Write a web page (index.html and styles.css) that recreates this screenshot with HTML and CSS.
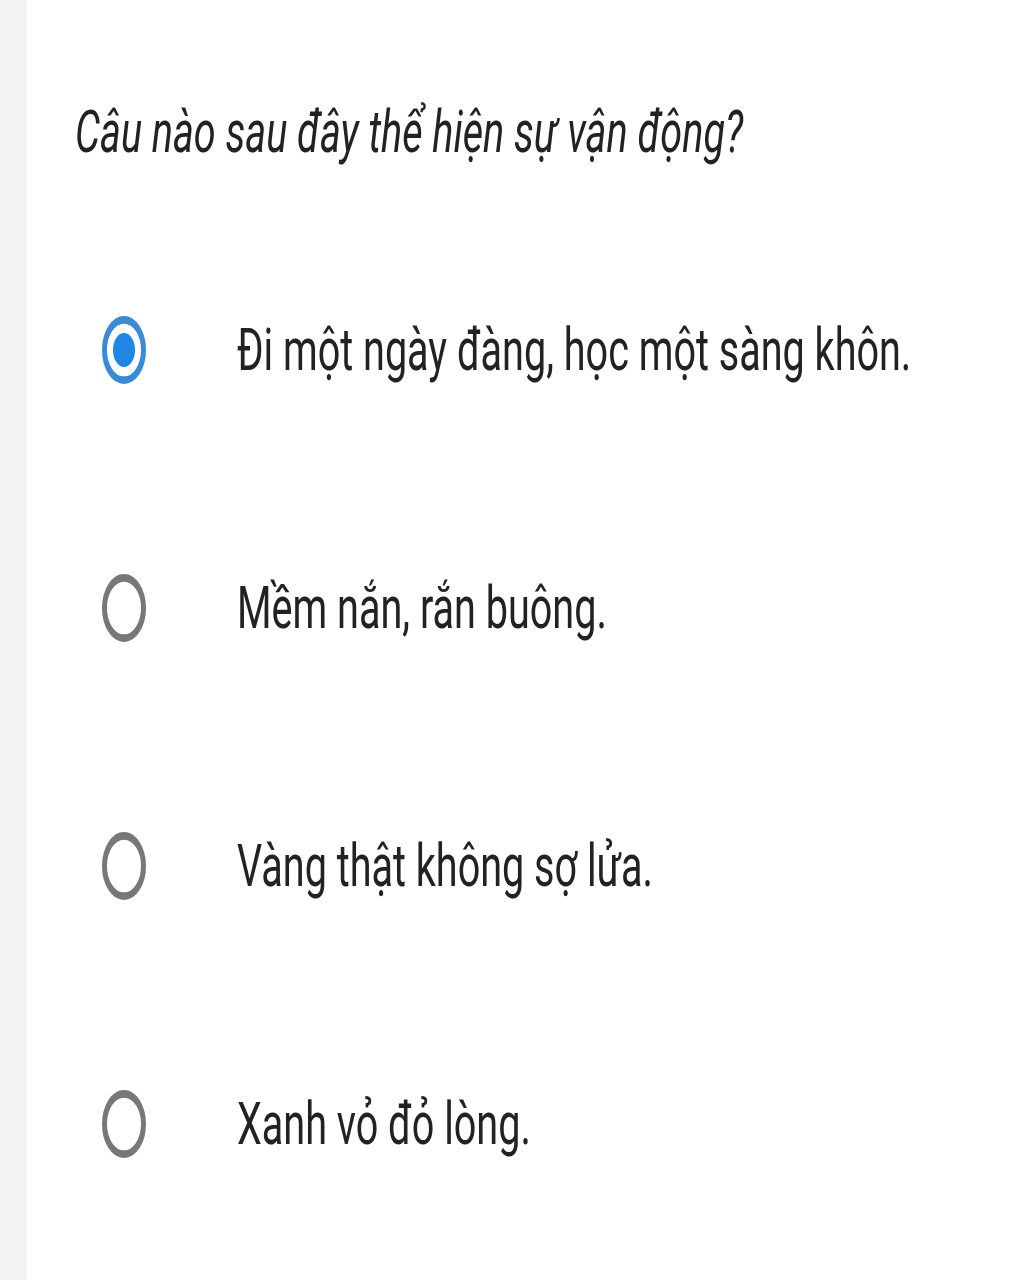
FILE: index.html
```html
<!DOCTYPE html>
<html lang="vi">
<head>
  <meta charset="UTF-8" />
  <title>Câu hỏi</title>
  <link rel="stylesheet" href="styles.css">
</head>
<body>
  <div class="sheet">
    <div class="gutter"></div>
    <main class="card">
      <div class="question"><span class="tall">Câu nào sau đây thể hiện sự vận động?</span></div>
      <div class="options">
        <label class="option">
          <span class="radio checked"></span>
          <span class="text tall">Đi một ngày đàng, học một sàng khôn.</span>
        </label>
        <label class="option">
          <span class="radio"></span>
          <span class="text tall">Mềm nắn, rắn buông.</span>
        </label>
        <label class="option">
          <span class="radio"></span>
          <span class="text tall">Vàng thật không sợ lửa.</span>
        </label>
        <label class="option">
          <span class="radio"></span>
          <span class="text tall">Xanh vỏ đỏ lòng.</span>
        </label>
      </div>
    </main>
  </div>
</body>
</html>
```

FILE: styles.css
```css
html, body {
  margin: 0;
  background: #fff;
  color: #222;
  font-family: Roboto, "Noto Sans", sans-serif;
  overflow: hidden;
}

.sheet {
  display: flex;
  min-height: 100vh;
}

.gutter {
  width: 25px;
  flex: none;
  background: #f1f3f4;
  border-right: 1px solid #e8eaed;
}

.card {
  flex: 1;
  padding: 108px 0 0 49px;
}

/* the screenshot is stretched tall */
.tall {
  display: inline-block;
  transform: scaleY(1.5);
}

.question {
  font-size: 39.6px;
  font-style: italic;
  line-height: 48px;
}

.options {
  margin-top: 65px;
  display: flex;
  flex-direction: column;
}

.option {
  height: 258px;
  display: flex;
  align-items: center;
  padding-left: 27px;
  gap: 91px;
}

.radio {
  width: 44px;
  height: 44px;
  box-sizing: border-box;
  border: 5px solid #777;
  border-radius: 50%;
  display: flex;
  align-items: center;
  justify-content: center;
  flex: none;
  transform: scaleY(1.55);
}

.radio.checked {
  border-color: #3a8ad6;
}

.radio.checked::after {
  content: "";
  width: 22px;
  height: 22px;
  border-radius: 50%;
  background: #1f86e6;
}

.text {
  font-size: 39.6px;
  line-height: 48px;
}
```
